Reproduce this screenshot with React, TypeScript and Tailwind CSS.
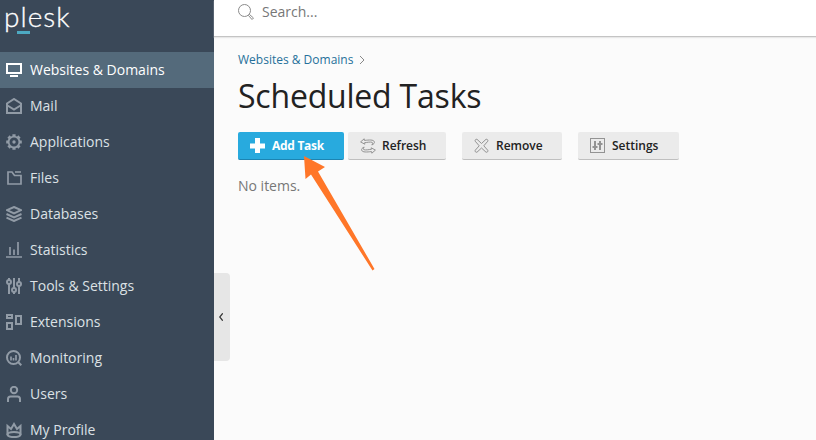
import type { ReactNode } from "react";

type NavItem = {
  label: string;
  icon: ReactNode;
  active?: boolean;
};

const NAV: NavItem[] = [
  {
    label: "Websites & Domains",
    active: true,
    icon: (
      <>
        <path d="M1 2h14v9H1z" />
        <path d="M4 14h8" />
      </>
    ),
  },
  {
    label: "Mail",
    icon: (
      <>
        <path d="M1 15V5.500L8 1l7 4.500V15z" />
        <path d="M1.500 7.500L8 11.500l6.500-4" />
      </>
    ),
  },
  {
    label: "Applications",
    icon: (
      <>
        <circle cx="8" cy="8" r="5.400" strokeWidth="1.800" />
        <path
          d="M8 .2v2M8 13.800v2M.2 8h2M13.800 8h2M2.500 2.500l1.400 1.400M12.100 12.100l1.400 1.400M13.500 2.500l-1.400 1.400M3.900 12.100l-1.400 1.400"
          strokeWidth="3.200"
        />
        <circle cx="8" cy="8" r="1.700" fill="currentColor" stroke="none" />
      </>
    ),
  },
  {
    label: "Files",
    icon: (
      <>
        <path d="M2 2h4l2.500 3.500H15V14H2z" strokeWidth="1.700" />
        <path d="M9 2h6" strokeWidth="1.600" />
      </>
    ),
  },
  {
    label: "Databases",
    icon: (
      <>
        <path d="M8 1l7 3.200-7 3.200-7-3.200z" />
        <path d="M.5 8L8 11.300 15.500 8M.5 11.700L8 15l7.500-3.300" />
      </>
    ),
  },
  {
    label: "Statistics",
    icon: <path d="M0 15h16M4 5v8M8 7.500V13M12 0v13" strokeWidth="1.700" />,
  },
  {
    label: "Tools & Settings",
    icon: (
      <>
        <path d="M3 0v2M3 6v10M8 0v10M8 14v2M13 0v4M13 8v8" />
        <circle cx="3" cy="4" r="2" />
        <circle cx="8" cy="12" r="2" />
        <circle cx="13" cy="6" r="2" />
      </>
    ),
  },
  {
    label: "Extensions",
    icon: <path d="M1 1h5v3H1zM1 9h5v6H1zM10 2h5v8h-5z" />,
  },
  {
    label: "Monitoring",
    icon: (
      <>
        <circle cx="7.500" cy="7.500" r="6.500" />
        <path d="M11.800 11.800l3.500 3.500" />
        <path d="M5 6.500v4M10 5v5.500M7.500 8v2.500" strokeWidth="1.700" />
      </>
    ),
  },
  {
    label: "Users",
    icon: (
      <>
        <circle cx="8" cy="4" r="3.200" />
        <path d="M2 16v-3c0-1.500.8-2.500 2.500-2.500h7c1.700 0 2.500 1 2.500 2.500v3" />
      </>
    ),
  },
  {
    label: "My Profile",
    icon: (
      <>
        <path d="M1.500 13V4l3.500 3 3-5 3 5 3.500-3v9" />
        <ellipse cx="8" cy="12.500" rx="6.500" ry="2.600" />
      </>
    ),
  },
];

function Logo() {
  return (
    <div className="h-[52px] pl-1">
      <div className="relative inline-block font-['Lato'] text-[28px] leading-[33px] font-light tracking-[1px] text-white [-webkit-text-stroke:0.3px_white]">
        plesk
        <span className="absolute top-[31px] left-[13px] h-[3px] w-[13px] bg-[#4da9c2]" />
      </div>
    </div>
  );
}

function Sidebar() {
  return (
    <aside className="w-[214px] shrink-0 bg-[#3a4858]">
      <Logo />
      <nav>
        {NAV.map((item) => (
          <a
            key={item.label}
            className={
              item.active
                ? "flex h-9 items-center gap-2 bg-[#546a7b] pl-1.5 text-sm text-white"
                : "flex h-9 items-center gap-2 pl-1.5 text-sm text-[#dce1e5]"
            }
          >
            <svg
              viewBox="0 0 16 16"
              fill="none"
              stroke="currentColor"
              strokeWidth="2"
              className={item.active ? "size-4 shrink-0" : "size-4 shrink-0 text-[#919ba6]"}
            >
              {item.icon}
            </svg>
            {item.label}
          </a>
        ))}
      </nav>
    </aside>
  );
}

function ToolButton({ label, icon, className = "" }: { label: string; icon: ReactNode; className?: string }) {
  return (
    <button
      className={`flex h-7 items-center rounded-xs border-b border-[#bfbfbf] bg-[#ebebeb] pl-3 text-[12px] font-semibold text-[#222] ${className}`}
    >
      <svg viewBox="0 0 16 16" fill="none" stroke="#939393" className="mr-1.5 size-4 shrink-0">
        {icon}
      </svg>
      {label}
    </button>
  );
}

function Toolbar() {
  return (
    <div className="mt-[14px] flex">
      <button className="flex h-7 w-[106px] items-center gap-1.5 rounded-xs border-b border-[#1c84b2] bg-[#28aade] pl-3 text-[12px] font-bold tracking-[-0.3px] text-white">
        <svg viewBox="0 0 16 16" className="size-4 shrink-0" fill="currentColor">
          <path d="M5 0h5v5.500h5v5h-5V15H5v-4.500H0v-5h5z" />
        </svg>
        Add Task
      </button>
      <ToolButton
        label="Refresh"
        className="ml-1 w-[98px]"
        icon={
          <>
            <path
              d="M4.200.8L.6 3.900l4.200 2.300-.2-1.500c3-.3 5.500-1 7.400-.4 1 .4.900 1.300-.2 2.700 2-.9 3-2 2.500-3.300-.9-2.200-5-1.800-9.900-1.300z"
              strokeLinejoin="round"
            />
            <path
              d="M11.800 15.200l3.600-3.100-4.200-2.300.2 1.500c-3 .3-5.500 1-7.400.4-1-.4-.9-1.300.2-2.700-2 .9-3 2-2.500 3.300.9 2.200 5 1.800 9.900 1.300z"
              strokeLinejoin="round"
            />
          </>
        }
      />
      <ToolButton
        label="Remove"
        className="ml-4 w-[100px]"
        icon={
          <path
            d="M3 1.300L7.500 5.500 12 1.300c1.200-.4 2.300.8 1.800 1.900L9.800 7.800l4 4.500c.5 1.200-.6 2.300-1.800 1.900L7.500 10 3 14.200c-1.200.4-2.300-.7-1.800-1.900l4-4.500-4-4.600C.7 2.100 1.800.9 3 1.300z"
            strokeLinejoin="round"
          />
        }
      />
      <ToolButton
        label="Settings"
        className="ml-4 w-[101px]"
        icon={
          <>
            <rect x=".5" y=".5" width="14" height="14" />
            <path d="M5 3v9M10 3v9" strokeWidth="2" />
            <path d="M2.500 9h5M7.500 6h5" strokeWidth="2" />
          </>
        }
      />
    </div>
  );
}

export default function App() {
  return (
    <div className="relative flex h-[440px] w-[816px] overflow-hidden bg-[#fbfbfb] font-['Open_Sans',sans-serif]">
      <Sidebar />

      <div className="flex-1">
        {/* Search */}
        <header className="flex h-[37px] items-start gap-2 border-b border-[#c4c4c4] bg-white pl-6 shadow-[0_1px_1px_#e8e8e8]">
          <svg viewBox="0 0 16 16" fill="none" stroke="#8b8b8b" className="mt-1 size-4">
            <circle cx="6.500" cy="6.500" r="6" />
            <path d="M10.500 11.500l1-1 4 3.500-1.500 1.500z" />
          </svg>
          <span className="text-sm leading-6 text-[#777]">Search...</span>
        </header>

        <main className="pl-6">
          <div className="flex items-center gap-1.5 pt-[14px] text-[12px] leading-[18px] text-[#25709a]">
            Websites &amp; Domains
            <svg viewBox="0 0 6 10" fill="none" stroke="#888" className="h-2.5 w-1.5">
              <path d="M1 1l4 4-4 4" />
            </svg>
          </div>
          <h1 className="mt-[5px] text-[32px] leading-[44px] tracking-[-0.2px] text-[#222]">Scheduled Tasks</h1>
          <Toolbar />
          <p className="mt-4 text-sm leading-5 text-[#777]">No items.</p>
        </main>
      </div>

      {/* Sidebar toggle */}
      <button className="absolute top-[273px] left-[214px] flex h-[88px] w-4 items-center rounded-r bg-[#e6e6e6] pl-[5px]">
        <svg viewBox="0 0 4 8" fill="none" stroke="#333" strokeWidth="1.200" className="h-2 w-1">
          <path d="M3.700.3L.7 4l3 3.700" />
        </svg>
      </button>

      {/* Pointer arrow */}
      <svg viewBox="0 0 72 116" fill="#ff7628" className="absolute top-[156px] left-[303px] h-[116px] w-[72px]">
        <path d="M1 0l21 11-7 4.500L71.500 113l-2 1.500L8 18.500l-5.500 4.500z" />
      </svg>
    </div>
  );
}
